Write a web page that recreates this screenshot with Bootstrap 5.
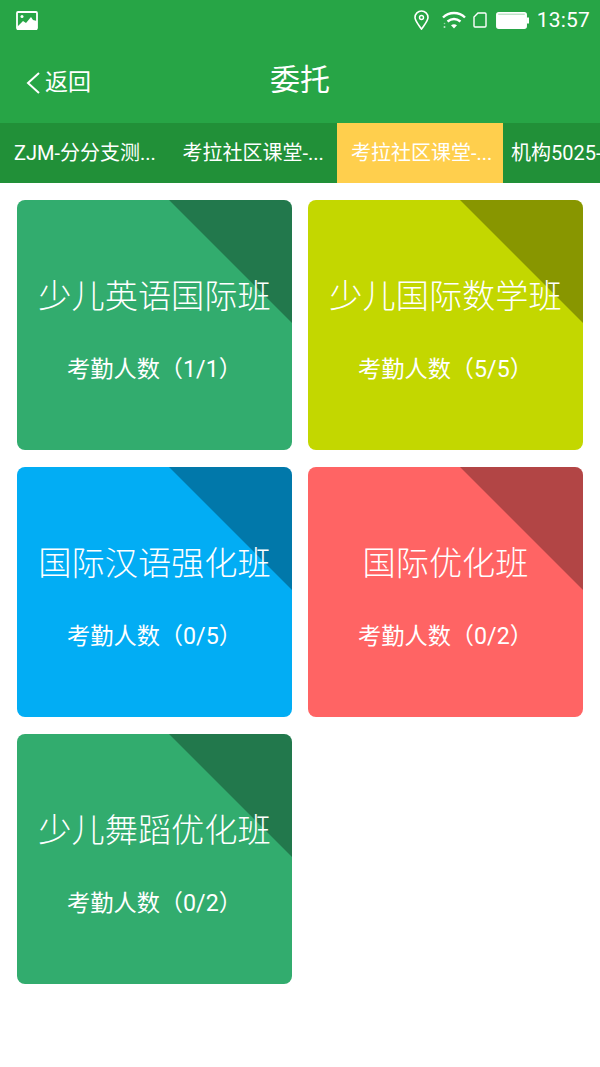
<!DOCTYPE html>
<html lang="zh">
<head>
<meta charset="utf-8">
<title>委托</title>
<link href="https://cdn.jsdelivr.net/npm/bootstrap@5.3.0/dist/css/bootstrap.min.css" rel="stylesheet">
<style>
html,body{width:600px;height:1067px;overflow:hidden;background:#fff;}
body{font-family:Roboto,"Noto Sans CJK SC",sans-serif;color:#fff;}
.app-top{background:#27a546;height:123px;}
.status-row{height:40px;padding:0 10px 0 16px;}
.status-time{font-size:21px;line-height:1;letter-spacing:.2px;}
.wifi-icon{margin:0 7px 0 12px;}
.sim-icon{margin-right:9px;}
.title-row{height:83px;}
.back-link{left:25px;top:50%;transform:translateY(-50%);font-size:23px;line-height:1;color:#fff;text-decoration:none;padding-top:2px;}
.page-title{font-size:30px;line-height:1;margin:-4px 0 0;font-weight:400;}
.tab-strip{background:#219038;height:60px;overflow:hidden;}
.tab-cell{flex:0 0 168.500px;font-size:20px;line-height:1;padding-left:14px;white-space:nowrap;overflow:hidden;}
.tab-cell-on{background:#ffcf4d;flex-basis:166px;}
.class-grid{display:grid;grid-template-columns:275px 275px;column-gap:16px;row-gap:17px;padding:17px 0 0 17px;}
.class-tile{height:250px;border-radius:8px;overflow:hidden;padding-top:73px;text-align:center;}
.class-tile::after{content:"";position:absolute;top:0;right:0;width:123px;height:123px;background:rgba(0,0,0,.3);clip-path:polygon(0 0,100% 0,100% 100%);}
.tile-name{position:relative;z-index:1;font-size:33.200px;line-height:48px;font-weight:300;margin:0;}
.tile-count{position:relative;z-index:1;font-size:23.200px;line-height:32px;margin:32px 0 0;font-weight:400;}
.tone-green{background:#32ac6e;}
.tone-lime{background:#c3d700;}
.tone-blue{background:#02adf4;}
.tone-red{background:#ff6464;}
</style>
</head>
<body>
<header class="app-top">
  <div class="status-row d-flex align-items-center">
    <svg width="22" height="19" viewBox="0 0 22 19"><rect x="1" y="1" width="20" height="17" rx="1" fill="none" stroke="#fff" stroke-width="1.800"/><path d="M1 16l6-6 3 2 5-6 2 3 4 1v9H1z" fill="#fff"/><circle cx="6" cy="5.500" r="1.500" fill="#fff"/></svg>
    <div class="ms-auto d-flex align-items-center">
      <svg width="17" height="20" viewBox="0 0 17 20"><path d="M8.500 19C5.500 14.500 2 11 2 7.500a6.500 6.500 0 0 1 13 0c0 3.500-3.500 7-6.500 11.500z" fill="none" stroke="#fff" stroke-width="1.600"/><circle cx="8.500" cy="7.500" r="2" fill="none" stroke="#fff" stroke-width="1.400"/></svg>
      <svg width="24" height="18" viewBox="0 0 24 18" class="wifi-icon"><path d="M1 6.500C7 .5 17 .5 23 6.500M5.500 10.500c4-3.200 9-3.200 13 0" fill="none" stroke="#fff" stroke-width="2.400"/><path d="M9 14.300c2-1.400 4-1.400 6 0L12 17.500z" fill="#fff"/><circle cx="2.500" cy="16" r="1" fill="#fff" opacity=".7"/><circle cx="2.500" cy="12.500" r=".8" fill="#fff" opacity=".5"/></svg>
      <svg width="14" height="16" viewBox="0 0 14 16" class="sim-icon"><path d="M5 1h7a1 1 0 0 1 1 1v12a1 1 0 0 1-1 1H2a1 1 0 0 1-1-1V5z" fill="none" stroke="#fff" stroke-width="1.400"/></svg>
      <svg width="33" height="17" viewBox="0 0 33 17" class="me-2"><rect x=".8" y=".8" width="29.400" height="15.400" rx="2" fill="#fff" stroke="#fff" stroke-width="1.500"/><path d="M2.200 2.200h26.600" stroke="#27a546" stroke-width=".7" opacity=".6"/><rect x="31" y="5.500" width="2" height="6" fill="#fff"/></svg>
      <span class="status-time">13:57</span>
    </div>
  </div>
  <div class="title-row position-relative d-flex align-items-center justify-content-center">
    <a class="back-link position-absolute d-flex align-items-center" href="#">
      <svg width="16" height="24" viewBox="0 0 16 24" class="me-1"><path d="M14 2L3 12l11 10" fill="none" stroke="#fff" stroke-width="2"/></svg>返回</a>
    <h1 class="page-title">委托</h1>
  </div>
</header>
<nav class="tab-strip d-flex">
  <div class="tab-cell d-flex align-items-center">ZJM-分分支测...</div>
  <div class="tab-cell d-flex align-items-center">考拉社区课堂-...</div>
  <div class="tab-cell tab-cell-on d-flex align-items-center">考拉社区课堂-...</div>
  <div class="tab-cell d-flex align-items-center px-2">机构5025-</div>
</nav>
<main class="class-grid">
  <section class="class-tile tone-green position-relative"><p class="tile-name">少儿英语国际班</p><p class="tile-count">考勤人数（1/1）</p></section>
  <section class="class-tile tone-lime position-relative"><p class="tile-name">少儿国际数学班</p><p class="tile-count">考勤人数（5/5）</p></section>
  <section class="class-tile tone-blue position-relative"><p class="tile-name">国际汉语强化班</p><p class="tile-count">考勤人数（0/5）</p></section>
  <section class="class-tile tone-red position-relative"><p class="tile-name">国际优化班</p><p class="tile-count">考勤人数（0/2）</p></section>
  <section class="class-tile tone-green position-relative"><p class="tile-name">少儿舞蹈优化班</p><p class="tile-count">考勤人数（0/2）</p></section>
</main>
<script src="https://cdn.jsdelivr.net/npm/bootstrap@5.3.0/dist/js/bootstrap.bundle.min.js"></script>
</body>
</html>
